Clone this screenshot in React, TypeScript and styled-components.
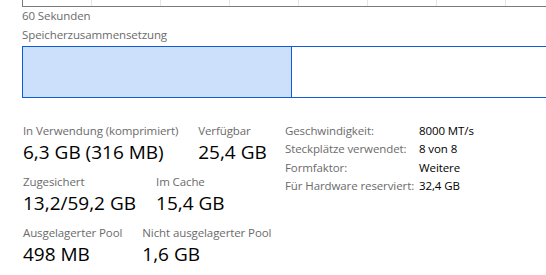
import { Fragment } from 'react';
import styled, { createGlobalStyle } from 'styled-components';

const GlobalStyle = createGlobalStyle`
  html, body {
    margin: 0;
    padding: 0;
    background: #ffffff;
    overflow: hidden;
  }
  body {
    font-family: "Open Sans", "Noto Sans", sans-serif;
    -webkit-font-smoothing: antialiased;
  }
`;

const Page = styled.div`
  width: 546px;
  height: 275px;
  overflow: hidden;
  padding-left: 22px;
  box-sizing: border-box;
`;

const GraphClip = styled.div`
  width: 700px;
  height: 7px;

  svg {
    display: block;
  }
`;

const Caption = styled.div<{ $top?: number }>`
  font-size: 11.5px;
  letter-spacing: -0.1px;
  line-height: 16px;
  color: #6b6b6b;
  margin-top: ${({ $top }) => $top ?? 0}px;
  white-space: nowrap;
`;

const CompositionBar = styled.div`
  display: flex;
  width: 700px;
  height: 52px;
  margin-top: 3px;
  border: 1px solid #0f5bd8;
  box-sizing: border-box;
`;

const BarSegment = styled.div<{ $width: number; $fill: string }>`
  width: ${({ $width }) => $width}px;
  background: ${({ $fill }) => $fill};
  border-right: 1px solid #0f5bd8;
  flex-shrink: 0;
`;

const Details = styled.div`
  display: flex;
  margin-top: 24px;
`;

const Stats = styled.div`
  width: 263px;
  display: flex;
  flex-direction: column;
  gap: 7px;
`;

const StatRow = styled.div`
  display: flex;
  gap: 19px;
`;

const Stat = styled.div`
  display: flex;
  flex-direction: column;
  padding-left: 1px;
`;

const StatLabel = styled.div`
  font-size: 11.5px;
  letter-spacing: -0.1px;
  line-height: 17px;
  color: #6b6b6b;
  white-space: nowrap;
`;

const StatValue = styled.div`
  font-size: 19px;
  line-height: 27px;
  color: #000000;
  white-space: nowrap;
`;

const Props = styled.div`
  display: grid;
  grid-template-columns: 134px auto;
  grid-auto-rows: 18.4px;
  align-content: start;
`;

const PropLabel = styled.div`
  font-size: 11.5px;
  letter-spacing: -0.1px;
  line-height: 17px;
  color: #6b6b6b;
  white-space: nowrap;
`;

const PropValue = styled.div`
  font-size: 11.5px;
  letter-spacing: -0.1px;
  line-height: 17px;
  color: #000000;
  white-space: nowrap;
`;

const gridLines = [69, 138, 207, 276, 345, 414, 483, 552, 621];

function HistoryGraph() {
  return (
    <GraphClip>
      <svg width="700" height="7" viewBox="0 0 700 7">
        {gridLines.map((x) => (
          <rect key={x} x={x} y={0} width={1} height={6} fill="#e6e6e6" />
        ))}
        <rect x={0} y={0} width={1} height={7} fill="#7a7a7a" />
        <rect x={0} y={6} width={700} height={1} fill="#7a7a7a" />
      </svg>
    </GraphClip>
  );
}

const stats = [
  [
    { label: 'In Verwendung (komprimiert)', value: '6,3 GB (316 MB)' },
    { label: 'Verfügbar', value: '25,4 GB' },
  ],
  [
    { label: 'Zugesichert', value: '13,2/59,2 GB' },
    { label: 'Im Cache', value: '15,4 GB' },
  ],
  [
    { label: 'Ausgelagerter Pool', value: '498 MB' },
    { label: 'Nicht ausgelagerter Pool', value: '1,6 GB' },
  ],
];

const properties = [
  ['Geschwindigkeit:', '8000 MT/s'],
  ['Steckplätze verwendet:', '8 von 8'],
  ['Formfaktor:', 'Weitere'],
  ['Für Hardware reserviert:', '32,4 GB'],
];

export default function App() {
  return (
    <>
      <GlobalStyle />
      <Page>
        <HistoryGraph />
        <Caption $top={1}>60 Sekunden</Caption>
        <Caption $top={3}>Speicherzusammensetzung</Caption>
        <CompositionBar>
          <BarSegment $width={268} $fill="#cce0fc" />
        </CompositionBar>
        <Details>
          <Stats>
            {stats.map((row, i) => (
              <StatRow key={i}>
                {row.map((s) => (
                  <Stat key={s.label}>
                    <StatLabel>{s.label}</StatLabel>
                    <StatValue>{s.value}</StatValue>
                  </Stat>
                ))}
              </StatRow>
            ))}
          </Stats>
          <Props>
            {properties.map(([label, value]) => (
              <Fragment key={label}>
                <PropLabel>{label}</PropLabel>
                <PropValue>{value}</PropValue>
              </Fragment>
            ))}
          </Props>
        </Details>
      </Page>
    </>
  );
}
